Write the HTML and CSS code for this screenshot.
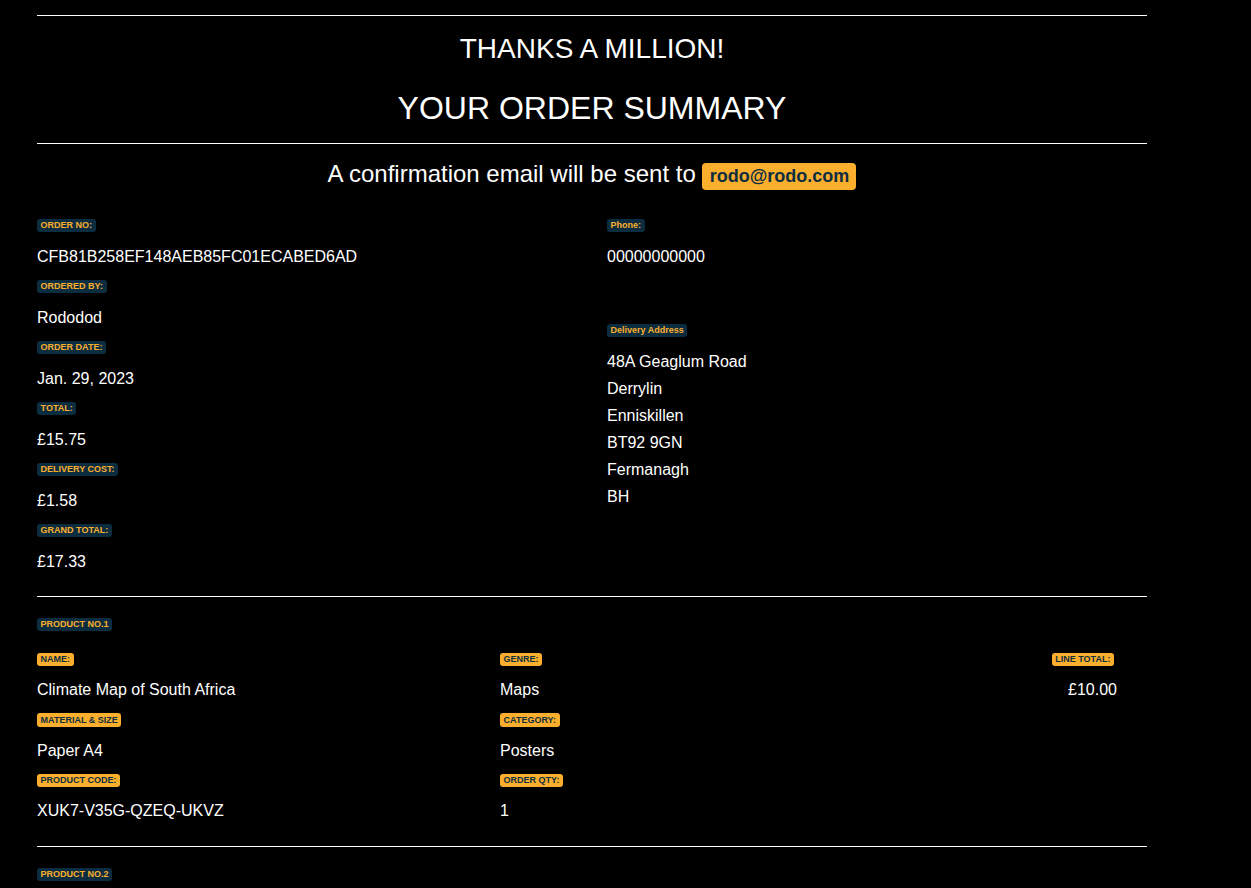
FILE: index.html
```html
<!DOCTYPE html>
<html lang="en">
<head>
<meta charset="utf-8">
<title>Order Summary</title>
<link rel="stylesheet" href="styles.css">
</head>
<body>
<main class="page">
  <hr class="rule rule-top">
  <h3 class="title-sm">THANKS A MILLION!</h3>
  <h2 class="title-lg">YOUR ORDER SUMMARY</h2>
  <hr class="rule rule-mid">
  <h4 class="confirm">A confirmation email will be sent to <span class="email">rodo@rodo.com</span></h4>

  <section class="info">
    <div class="col">
      <div class="item"><div class="lbl"><span class="tag dark">ORDER NO:</span></div><div class="val">CFB81B258EF148AEB85FC01ECABED6AD</div></div>
      <div class="item"><div class="lbl"><span class="tag dark">ORDERED BY:</span></div><div class="val">Rododod</div></div>
      <div class="item"><div class="lbl"><span class="tag dark">ORDER DATE:</span></div><div class="val">Jan. 29, 2023</div></div>
      <div class="item"><div class="lbl"><span class="tag dark">TOTAL:</span></div><div class="val">£15.75</div></div>
      <div class="item"><div class="lbl"><span class="tag dark">DELIVERY COST:</span></div><div class="val">£1.58</div></div>
      <div class="item"><div class="lbl"><span class="tag dark">GRAND TOTAL:</span></div><div class="val">£17.33</div></div>
    </div>
    <div class="col">
      <div class="item phone"><div class="lbl"><span class="tag dark">Phone:</span></div><div class="val">00000000000</div></div>
      <div class="item"><div class="lbl"><span class="tag dark">Delivery Address</span></div>
        <div class="address">
          <div>48A Geaglum Road</div>
          <div>Derrylin</div>
          <div>Enniskillen</div>
          <div>BT92 9GN</div>
          <div>Fermanagh</div>
          <div>BH</div>
        </div>
      </div>
    </div>
  </section>

  <hr class="rule rule-info">

  <section class="product">
    <div class="prod-head"><span class="tag dark">PRODUCT NO.1</span></div>
    <div class="prod-grid">
      <div class="col">
        <div class="item"><div class="lbl"><span class="tag light">NAME:</span></div><div class="val">Climate Map of South Africa</div></div>
        <div class="item"><div class="lbl"><span class="tag light">MATERIAL &amp; SIZE</span></div><div class="val">Paper A4</div></div>
        <div class="item"><div class="lbl"><span class="tag light">PRODUCT CODE:</span></div><div class="val">XUK7-V35G-QZEQ-UKVZ</div></div>
      </div>
      <div class="col">
        <div class="item"><div class="lbl"><span class="tag light">GENRE:</span></div><div class="val">Maps</div></div>
        <div class="item"><div class="lbl"><span class="tag light">CATEGORY:</span></div><div class="val">Posters</div></div>
        <div class="item"><div class="lbl"><span class="tag light">ORDER QTY:</span></div><div class="val">1</div></div>
      </div>
      <div class="col col-right">
        <div class="item"><div class="lbl"><span class="tag light tag-total">LINE TOTAL:</span></div><div class="val">£10.00</div></div>
      </div>
    </div>
  </section>

  <hr class="rule rule-prod">

  <section class="product">
    <div class="prod-head"><span class="tag dark">PRODUCT NO.2</span></div>
  </section>
</main>
</body>
</html>
```
FILE: styles.css
```css
html, body {
  margin: 0;
  padding: 0;
  background: #000;
  color: #fff;
  font-family: "Liberation Sans", Arial, Helvetica, sans-serif;
}

.page {
  width: 1110px;
  margin-left: 37px;
  padding-top: 15px;
  padding-bottom: 40px;
}

.rule {
  border: 0;
  border-top: 1px solid #fff;
  margin: 0;
  height: 0;
}

.title-sm {
  font-size: 28px;
  font-weight: 400;
  line-height: 1.2;
  text-align: center;
  margin: 15.5px 0 0;
}

.title-lg {
  font-size: 32px;
  font-weight: 400;
  line-height: 1.2;
  text-align: center;
  margin: 23.5px 0 0;
}

.rule-mid {
  margin-top: 16px;
}

.confirm {
  font-size: 24px;
  font-weight: 400;
  line-height: 28.8px;
  text-align: center;
  margin: 16.5px 0 0;
}

.email {
  display: inline-block;
  background: #fcaf2c;
  color: #0c2d40;
  font-weight: 700;
  font-size: 18px;
  line-height: 1;
  padding: 4.5px 7.2px;
  border-radius: 4px;
}

.tag {
  display: inline-block;
  font-size: 9px;
  font-weight: 700;
  line-height: 1;
  padding: 2.25px 3.6px;
  border-radius: 3px;
  white-space: nowrap;
}

.tag.dark {
  background: #0c2d40;
  color: #fcaf2c;
}

.tag.light {
  background: #fcaf2c;
  color: #0c2d40;
}

.col {
  display: flex;
  flex-direction: column;
}

.lbl {
  display: flex;
  height: 13.5px;
}

.val {
  font-size: 16px;
  line-height: 24px;
  margin-top: 12px;
  margin-bottom: 11px;
}

.info {
  display: grid;
  grid-template-columns: 570px 1fr;
  margin-top: 29px;
}

.info .val {
  margin-top: 12.5px;
}

.phone {
  margin-bottom: 44px;
}

.address {
  font-size: 16px;
  line-height: 27px;
  margin-top: 11px;
}

.rule-info {
  margin-top: 11px;
}

.prod-head {
  display: flex;
  margin-top: 21px;
  height: 13.5px;
}

.prod-grid {
  display: grid;
  grid-template-columns: 463px 1fr auto;
  padding-right: 30px;
  margin-top: 21.5px;
}

.col-right {
  text-align: right;
}

.col-right .lbl {
  justify-content: flex-end;
}

.tag-total {
  margin-right: 3px;
}

.rule-prod {
  margin-top: 11.5px;
}
```
